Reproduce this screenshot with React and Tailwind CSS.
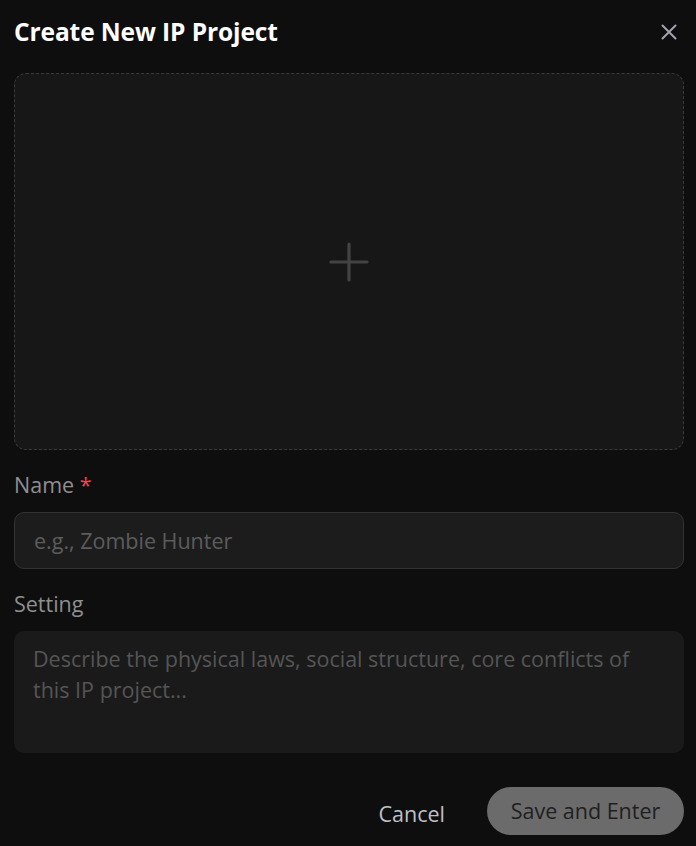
export default function App() {
  return (
    <div
      className="w-[696px] h-[846px] bg-[#0e0e0f] pl-[14px] pr-[12px] pt-[16px] flex flex-col"
      style={{ fontFamily: '"Open Sans", "Noto Sans", sans-serif' }}
    >
      <div className="flex items-center justify-between h-[32px]">
        <h1 className="text-[24.5px] font-bold text-white tracking-[-0.1px]">Create New IP Project</h1>
        <button className="text-[#a3a3ab] mr-[7px]">
          <svg width="16" height="16" viewBox="0 0 16 16" fill="none" stroke="currentColor" strokeWidth="2" strokeLinecap="round">
            <path d="M1.5 1.5l13 13M14.5 1.5l-13 13" />
          </svg>
        </button>
      </div>

      <div className="mt-[25px] h-[377px] rounded-[12px] border border-dashed border-[#3a3a3a] bg-[#171717] flex items-center justify-center">
        <svg width="40" height="40" viewBox="0 0 40 40" fill="none" stroke="#434343" strokeWidth="3.2" strokeLinecap="round">
          <path d="M20 2v36M2 20h36" />
        </svg>
      </div>

      <label className="mt-[21px] text-[21.5px] text-[#8f8f8f] leading-[28px]">
        Name <span className="text-[#e5484d]">*</span>
      </label>
      <input
        className="mt-[13px] h-[57px] rounded-[10px] border border-[#333333] bg-[#1c1c1c] px-[19px] text-[21.5px] text-white placeholder:text-[#5c5c5c] outline-none"
        placeholder="e.g., Zombie Hunter"
      />

      <label className="mt-[21px] text-[21.5px] text-[#8f8f8f] leading-[28px]">Setting</label>
      <textarea
        className="mt-[13px] h-[122px] resize-none rounded-[10px] bg-[#1a1a1a] px-[19px] py-[12px] text-[21.5px] leading-[31px] text-white placeholder:text-[#555555] outline-none"
        placeholder="Describe the physical laws, social structure, core conflicts of this IP project..."
      />

      <div className="mt-[34px] flex items-center justify-end gap-[42px]">
        <button className="text-[21.5px] text-[#c0c0c8] mt-[6px]">Cancel</button>
        <button className="h-[48px] w-[197px] rounded-full bg-[#6b6b6b] text-[21.5px] text-[#1f1f1f]">
          Save and Enter
        </button>
      </div>
    </div>
  )
}
